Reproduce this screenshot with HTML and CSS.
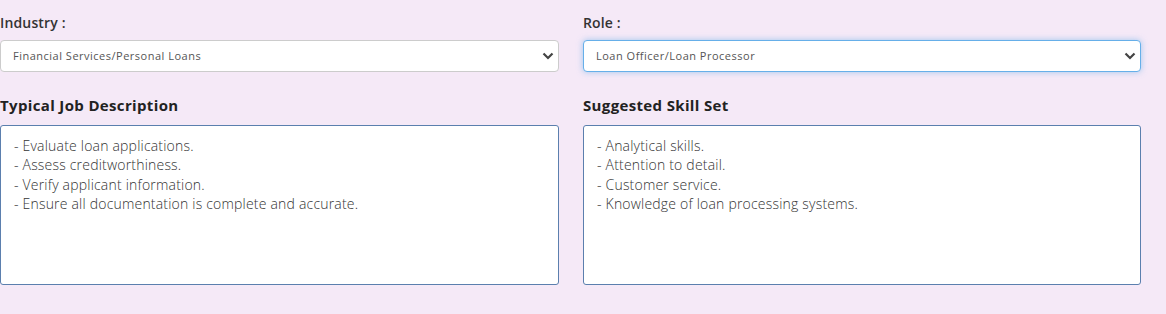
FILE: index.html
```html
<!DOCTYPE html>
<html lang="en">
<head>
  <meta charset="UTF-8">
  <title>Job Role Helper</title>
  <link rel="stylesheet" href="styles.css">
</head>
<body>
  <div class="grid">
    <div class="field">
      <label class="label" for="industry">Industry :</label>
      <div class="select-wrap">
        <select id="industry" class="select">
          <option>Financial Services/Personal Loans</option>
        </select>
        <svg class="chev" width="12" height="8" viewBox="0 0 12 8"><path d="M1.5 1.5 L6 6 L10.5 1.5" fill="none" stroke="#444" stroke-width="2.2"/></svg>
      </div>
    </div>
    <div class="field">
      <label class="label" for="role">Role :</label>
      <div class="select-wrap">
        <select id="role" class="select focus">
          <option>Loan Officer/Loan Processor</option>
        </select>
        <svg class="chev" width="12" height="8" viewBox="0 0 12 8"><path d="M1.5 1.5 L6 6 L10.5 1.5" fill="none" stroke="#444" stroke-width="2.2"/></svg>
      </div>
    </div>

    <div class="field">
      <h3 class="heading">Typical Job Description</h3>
      <textarea class="box" readonly>- Evaluate loan applications.
- Assess creditworthiness.
- Verify applicant information.
- Ensure all documentation is complete and accurate.</textarea>
    </div>
    <div class="field">
      <h3 class="heading">Suggested Skill Set</h3>
      <textarea class="box" readonly>- Analytical skills.
- Attention to detail.
- Customer service.
- Knowledge of loan processing systems.</textarea>
    </div>
  </div>
</body>
</html>
```

FILE: styles.css
```css
body {
  margin: 0;
  background-color: #f5e9f7;
  font-family: "Open Sans", "Noto Sans", sans-serif;
  color: #333;
}
.grid {
  display: grid;
  grid-template-columns: 559px 558px;
  column-gap: 24px;
  padding: 13px 0 0 0;
}
.field {
  display: flex;
  flex-direction: column;
}
.label {
  font-size: 14px;
  font-weight: 600;
  color: #333;
  line-height: 20px;
  letter-spacing: 0.15px;
  margin-bottom: 7px;
}
.select-wrap {
  position: relative;
}
.select {
  appearance: none;
  -webkit-appearance: none;
  width: 100%;
  height: 32px;
  box-sizing: border-box;
  background: #fff;
  border: 1px solid #ccc;
  border-radius: 4px;
  padding: 0 12px 2px;
  font-family: inherit;
  font-size: 11px;
  letter-spacing: 0.5px;
  color: #555;
  outline: none;
}
.select.focus {
  border-color: #66afe9;
  box-shadow: 0 0 6px rgba(102, 175, 233, 0.6);
}
.chev {
  position: absolute;
  right: 5px;
  top: 12px;
  pointer-events: none;
}
.heading {
  margin: 23px 0 10px;
  font-size: 15px;
  font-weight: 700;
  color: #222;
  line-height: 20px;
  letter-spacing: 0.35px;
}
.box {
  height: 160px;
  box-sizing: border-box;
  resize: none;
  border: 1px solid #5b7fae;
  border-radius: 3px;
  background: #fff;
  padding: 10px 13px;
  font-family: inherit;
  font-size: 14px;
  font-weight: 300;
  letter-spacing: 0.2px;
  line-height: 19.4px;
  color: #333;
  outline: none;
}
```
